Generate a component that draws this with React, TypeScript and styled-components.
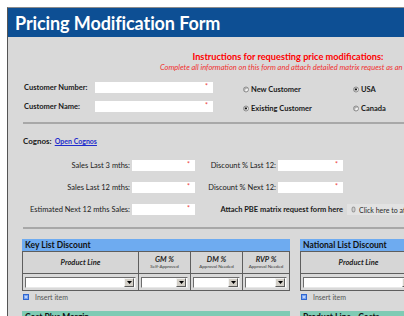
import styled, { createGlobalStyle } from "styled-components";

const GlobalStyle = createGlobalStyle`
  html, body {
    margin: 0;
    padding: 0;
    background: #ffffff;
    overflow: hidden;
  }
  body {
    font-family: Lato, "Open Sans", Arial, sans-serif;
    color: #1a1a1a;
  }
`;

const Page = styled.div`
  padding: 7px 0 0 7px;
  width: 404px;
  height: 316px;
  box-sizing: border-box;
  overflow: hidden;
`;

const Sheet = styled.div`
  width: 560px;
  min-height: 330px;
  background: #d9d9d9;
  border-left: 1px solid #555555;
  border-top: 1px solid #8c8c8c;
`;

const TitleBar = styled.div`
  height: 29px;
  background: #0d4f94;
  color: #ffffff;
  display: flex;
  align-items: center;
  padding-left: 7px;
  font-size: 18px;
  font-weight: 700;
  letter-spacing: -0.1px;
`;

const Body = styled.div`
  padding: 0 0 0 15px;
`;

const Instructions = styled.div`
  margin-left: 137px;
  width: 262px;
  padding-top: 14px;
  text-align: center;
  white-space: nowrap;
  color: #ff0000;
`;

const InstructionTitle = styled.div`
  font-size: 9.2px;
  font-weight: 700;
  line-height: 12px;
  transform: translateX(-3px);
`;

const InstructionText = styled.div`
  font-size: 7.5px;
  font-style: italic;
  line-height: 10px;
  color: #f03030;
`;

const CustomerGrid = styled.div`
  margin-top: 9px;
  display: grid;
  grid-template-columns: 71px 118px 110px auto;
  grid-auto-rows: 11px;
  row-gap: 8px;
  padding-left: 1px;
  align-items: center;
`;

const Label = styled.div<{ $right?: boolean; $bold?: boolean }>`
  font-size: 7.5px;
  font-weight: ${(p) => (p.$bold ? 700 : 400)};
  text-align: ${(p) => (p.$right ? "right" : "left")};
  white-space: nowrap;
  line-height: 11px;
`;

const Field = styled.div`
  height: 11px;
  background: #ffffff;
  position: relative;
`;

const Star = styled.span`
  position: absolute;
  right: 5px;
  top: 0;
  font-size: 7px;
  line-height: 9px;
  color: #ee3b3b;
`;

const RadioItem = styled.div<{ $shift?: number }>`
  display: flex;
  align-items: center;
  gap: 2px;
  font-size: 7.5px;
  font-weight: 700;
  white-space: nowrap;
  margin-left: ${(p) => p.$shift ?? 0}px;
  transform: translateY(1.5px);
`;

const Radio = styled.span<{ $checked?: boolean }>`
  width: 6px;
  height: 6px;
  border-radius: 50%;
  box-sizing: border-box;
  border: 1px solid #8a8a8a;
  background: #f7f7f7;
  box-shadow: inset 1px 1px 1px rgba(0, 0, 0, 0.35);
  display: flex;
  align-items: center;
  justify-content: center;
  &::after {
    content: "";
    width: 2px;
    height: 2px;
    border-radius: 50%;
    background: ${(p) => (p.$checked ? "#000" : "transparent")};
  }
`;

const Rule = styled.div<{ $top: number }>`
  margin-top: ${(p) => p.$top}px;
  height: 2px;
  background: #a8a8a8;
`;

const CognosLine = styled.div`
  margin-top: 12px;
  font-size: 8px;
  line-height: 10px;
  display: flex;
  gap: 3px;
  align-items: baseline;
`;

const CognosLabel = styled.span`
  font-weight: 700;
`;

const CognosLink = styled.a`
  color: #1f2ccc;
  font-weight: 700;
  font-size: 7px;
  text-decoration: underline;
`;

const SalesGrid = styled.div`
  margin-top: 14px;
  display: grid;
  grid-template-columns: 107px 63px 79px 65px auto;
  grid-auto-rows: 11px;
  column-gap: 2px;
  row-gap: 11px;
  align-items: center;
`;

const AttachLabel = styled(Label)`
  grid-column: 3 / 5;
`;

const AttachLink = styled.div`
  display: flex;
  align-items: center;
  gap: 3px;
  margin-left: 2px;
  padding-left: 4px;
  height: 11px;
  background: #e2e2e2;
  font-size: 7px;
  white-space: nowrap;
  color: #2a2a2a;
`;

const Tables = styled.div`
  margin-top: 10px;
  margin-left: -1px;
  display: flex;
  gap: 10px;
  align-items: flex-start;
`;

const TableBlock = styled.div<{ $width: number }>`
  width: ${(p) => p.$width}px;
  flex-shrink: 0;
`;

const TableTitle = styled.div<{ $color: string }>`
  height: 12px;
  background: ${(p) => p.$color};
  font-size: 8.5px;
  font-weight: 700;
  line-height: 12px;
  padding-left: 3px;
  color: #111;
  white-space: nowrap;
  box-sizing: border-box;
`;

const Grid = styled.div<{ $cols: string }>`
  display: grid;
  grid-template-columns: ${(p) => p.$cols};
  border-left: 1px solid #5e5e5e;
  border-bottom: 1px solid #5e5e5e;
`;

const HeadCell = styled.div`
  height: 21px;
  background: #d6d6d6;
  border-right: 1px solid #5e5e5e;
  border-top: 1px solid #5e5e5e;
  display: flex;
  flex-direction: column;
  align-items: center;
  justify-content: center;
`;

const HeadText = styled.div`
  font-size: 7.5px;
  font-weight: 700;
  font-style: italic;
  line-height: 9px;
  color: #222;
`;

const HeadSub = styled.div`
  font-size: 4.5px;
  line-height: 6px;
  color: #333;
  white-space: nowrap;
`;

const DataCell = styled.div`
  height: 16px;
  border-right: 1px solid #5e5e5e;
  border-top: 1px solid #5e5e5e;
  display: flex;
  align-items: center;
  padding: 0 2px;
`;

const Select = styled.div`
  flex: 1;
  height: 11px;
  box-sizing: border-box;
  background: #ffffff;
  border: 1px solid;
  border-color: #6d6d6d #e8e8e8 #e8e8e8 #6d6d6d;
  display: flex;
  justify-content: flex-end;
  align-items: center;
  padding-right: 1px;
`;

const SelectButton = styled.div`
  width: 8px;
  height: 7px;
  background: #d4d0c8;
  border: 1px solid;
  border-color: #f4f4f4 #5a5a5a #5a5a5a #f4f4f4;
  display: flex;
  align-items: center;
  justify-content: center;
`;

const InsertRow = styled.div`
  height: 12px;
  display: flex;
  align-items: center;
  gap: 6px;
  padding-left: 1px;
  font-size: 7px;
  color: #555;
`;

const NextTitles = styled.div`
  margin-top: 8px;
  margin-left: -1px;
  display: flex;
  gap: 10px;
`;

const DropSelect = () => (
  <Select>
    <SelectButton>
      <svg width="5" height="3" viewBox="0 0 5 3">
        <path d="M0 0H5L2.5 3Z" fill="#000" />
      </svg>
    </SelectButton>
  </Select>
);

const InsertItem = () => (
  <InsertRow>
    <svg width="6" height="6" viewBox="0 0 6 6">
      <rect x="0" y="0" width="6" height="6" fill="#2f66d0" />
      <rect x="1" y="1" width="4" height="4" fill="#7aa4f0" />
      <path d="M1.5 2.5H4.5L3 4Z" fill="#fff" />
    </svg>
    Insert item
  </InsertRow>
);

const Input = () => (
  <Field>
    <Star>*</Star>
  </Field>
);

const DiscountTable = ({ title }: { title: string }) => (
  <TableBlock $width={268}>
    <TableTitle $color="#6eabf0">{title}</TableTitle>
    <Grid $cols="116px 52px 52px 1fr">
      <HeadCell>
        <HeadText>Product Line</HeadText>
      </HeadCell>
      <HeadCell>
        <HeadText>GM %</HeadText>
        <HeadSub>Self-Approved</HeadSub>
      </HeadCell>
      <HeadCell>
        <HeadText>DM %</HeadText>
        <HeadSub>Approval Needed</HeadSub>
      </HeadCell>
      <HeadCell>
        <HeadText>RVP %</HeadText>
        <HeadSub>Approval Needed</HeadSub>
      </HeadCell>
      {[0, 1, 2, 3].map((i) => (
        <DataCell key={i}>
          <DropSelect />
        </DataCell>
      ))}
    </Grid>
    <InsertItem />
  </TableBlock>
);

export default function App() {
  return (
    <Page>
      <GlobalStyle />
      <Sheet>
        <TitleBar>Pricing Modification Form</TitleBar>
        <Body>
          <Instructions>
            <InstructionTitle>Instructions for requesting price modifications:</InstructionTitle>
            <InstructionText>
              Complete all information on this form and attach detailed matrix request as an attachment
            </InstructionText>
          </Instructions>

          <CustomerGrid>
            <Label $bold>Customer Number:</Label>
            <Input />
            <RadioItem $shift={30}>
              <Radio />
              New Customer
            </RadioItem>
            <RadioItem $shift={30}>
              <Radio $checked />
              USA
            </RadioItem>
            <Label $bold>Customer Name:</Label>
            <Input />
            <RadioItem $shift={30}>
              <Radio $checked />
              Existing Customer
            </RadioItem>
            <RadioItem $shift={30}>
              <Radio />
              Canada
            </RadioItem>
          </CustomerGrid>

          <Rule $top={10} />

          <CognosLine>
            <CognosLabel>Cognos:</CognosLabel>
            <CognosLink href="#">Open Cognos</CognosLink>
          </CognosLine>

          <SalesGrid>
            <Label $right>Sales Last 3 mths:</Label>
            <Input />
            <Label $right>Discount % Last 12:</Label>
            <Input />
            <div />
            <Label $right>Sales Last 12 mths:</Label>
            <Input />
            <Label $right>Discount % Next 12:</Label>
            <Input />
            <div />
            <Label $right>Estimated Next 12 mths Sales:</Label>
            <Input />
            <AttachLabel $right $bold>
              Attach PBE matrix request form here
            </AttachLabel>
            <AttachLink>
              <svg width="5" height="7" viewBox="0 0 5 7">
                <ellipse cx="2.5" cy="3.5" rx="2" ry="3" fill="#9a9a9a" />
                <ellipse cx="2.5" cy="3.5" rx="1" ry="2" fill="#d0d0d0" />
              </svg>
              Click here to attach a file
            </AttachLink>
          </SalesGrid>

          <Rule $top={12} />

          <Tables>
            <DiscountTable title="Key List Discount" />
            <DiscountTable title="National List Discount" />
          </Tables>

          <NextTitles>
            <TableBlock $width={268}>
              <TableTitle $color="#7fcbb4">Cost Plus Margin</TableTitle>
            </TableBlock>
            <TableBlock $width={268}>
              <TableTitle $color="#7fcbb4">Product Line - Costs</TableTitle>
            </TableBlock>
          </NextTitles>
        </Body>
      </Sheet>
    </Page>
  );
}
